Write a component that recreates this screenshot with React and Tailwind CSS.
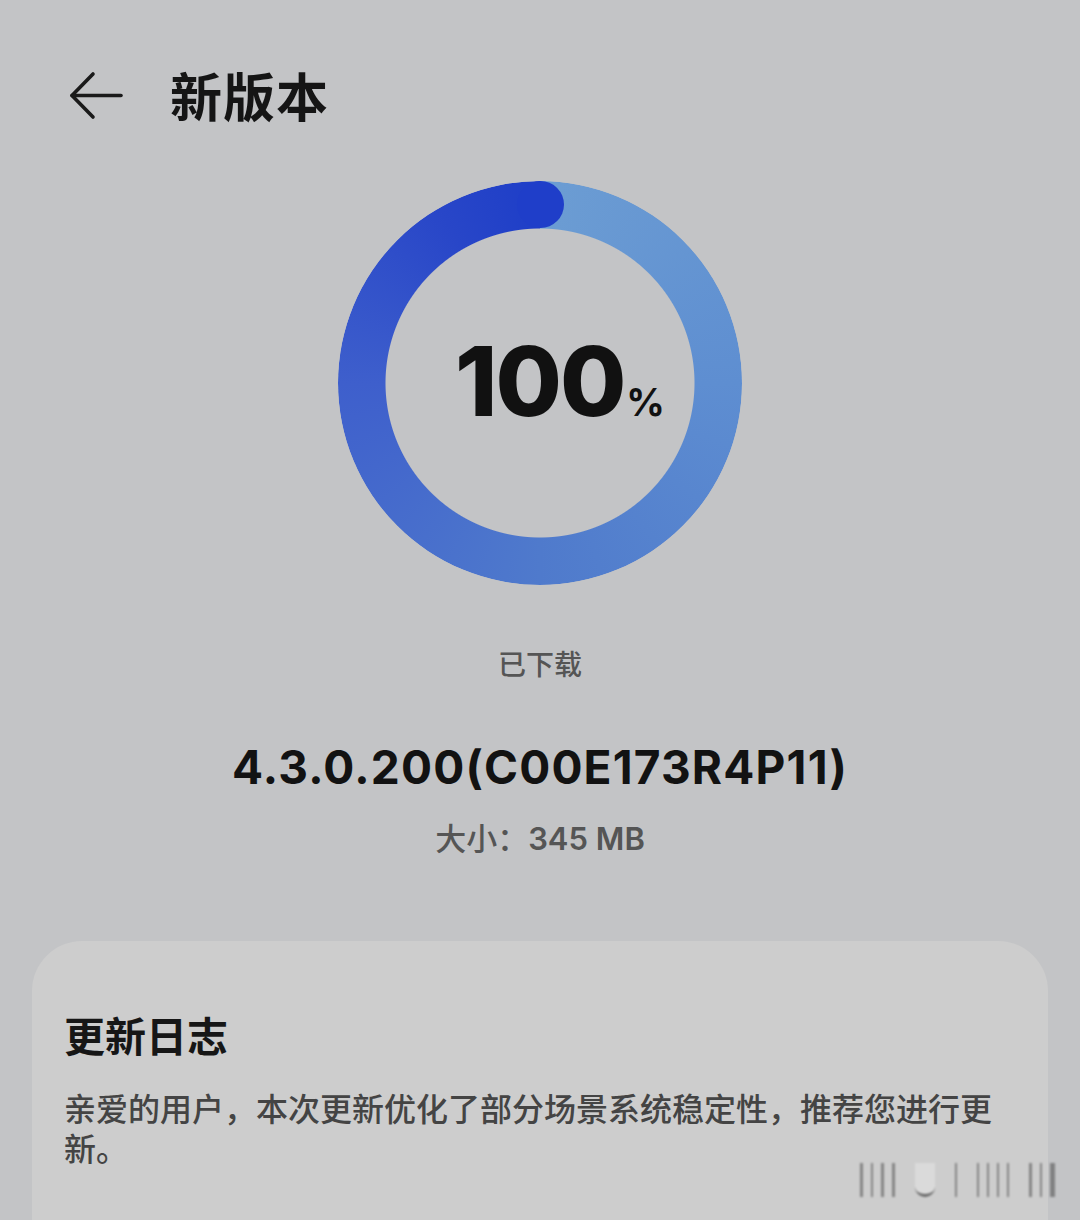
import React from "react";

const cjk = { fontFamily: '"Noto Sans CJK SC", "Noto Sans", sans-serif' };
const num = { fontFamily: 'Inter, "Noto Sans CJK SC", sans-serif' };

export default function App() {
  const bars = [3, 2, 3, 3, 0, 12, 0, 2, 0, 2, 2, 2, 2, 0, 3, 2, 5];
  return (
    <div className="w-[1080px] h-[1220px] bg-[#c3c4c6] overflow-hidden relative" style={cjk}>
      {/* header */}
      <div className="flex items-center h-[100px] mt-[45px] pl-[68px]">
        <svg width="56" height="52" viewBox="0 0 56 52" fill="none" stroke="#1a1a1a" strokeWidth="3.6" strokeLinecap="round" strokeLinejoin="round" className="mt-[4px]">
          <path d="M25 3 L4 24.5 L25 46" />
          <path d="M4 24.5 H53" />
        </svg>
        <div className="ml-[46px] text-[52px] font-bold text-[#151515] leading-none tracking-[1px]">新版本</div>
      </div>

      {/* ring */}
      <div className="flex justify-center mt-[36px]">
        <div className="relative w-[404px] h-[404px]">
          <div
            className="absolute inset-0 rounded-full bg-[conic-gradient(from_0deg,#6c9dd3_0deg,#5e8ed1_90deg,#4f7acc_180deg,#3e5fcc_270deg,#2846c8_330deg,#1e3ec8_360deg)] [mask:radial-gradient(circle,transparent_154px,#000_155px)]"
          />
          <div className="absolute w-[47px] h-[47px] rounded-full bg-[#1f3ec9] left-[178.5px] top-0" />
          <div className="absolute inset-0 flex items-center justify-center pl-[40px]">
            <div className="flex items-baseline text-[#111] -mt-[4px]" style={num}>
              <span className="text-[96px] font-extrabold leading-none tracking-[-2px]">100</span>
              <span className="text-[38px] font-bold leading-none ml-[2px]">%</span>
            </div>
          </div>
        </div>
      </div>

      <div className="text-center text-[28px] text-[#555] mt-[60px] leading-[36px] font-medium">已下载</div>
      <div className="text-center text-[46px] font-bold text-[#121212] mt-[58px] leading-[56px] tracking-[1.2px]" style={num}>
        4.3.0.200(C00E173R4P11)
      </div>
      <div className="text-center text-[31px] text-[#555] mt-[22px] leading-[40px] font-medium">
        大小：<span style={num} className="font-semibold">345 MB</span>
      </div>

      {/* card */}
      <div className="mx-[32px] mt-[82px] bg-[#cdcdcd] rounded-[50px] h-[400px] px-[32px] pt-[70px]">
        <div className="text-[41px] font-bold text-[#161616] leading-[46px]">更新日志</div>
        <div className="text-[32px] text-[#444] leading-[40px] mt-[30px] font-medium">
          亲爱的用户，本次更新优化了部分场景系统稳定性，推荐您进行更新。
        </div>
      </div>

      {/* watermark */}
      <div className="absolute left-[860px] top-[1163px] flex items-end gap-[8px] h-[34px] blur-[1px] opacity-60">
        {bars.map((w, i) =>
          w === 0 ? (
            <div key={i} className="w-[4px]" />
          ) : w === 12 ? (
            <div key={i} className="w-[20px] h-[34px] rounded-b-[10px] border-b-[3px] border-[#222] bg-[#e4e4e4]" />
          ) : (
            <div key={i} className="h-[34px] bg-[#555]" style={{ width: w + "px" }} />
          )
        )}
      </div>
    </div>
  );
}
